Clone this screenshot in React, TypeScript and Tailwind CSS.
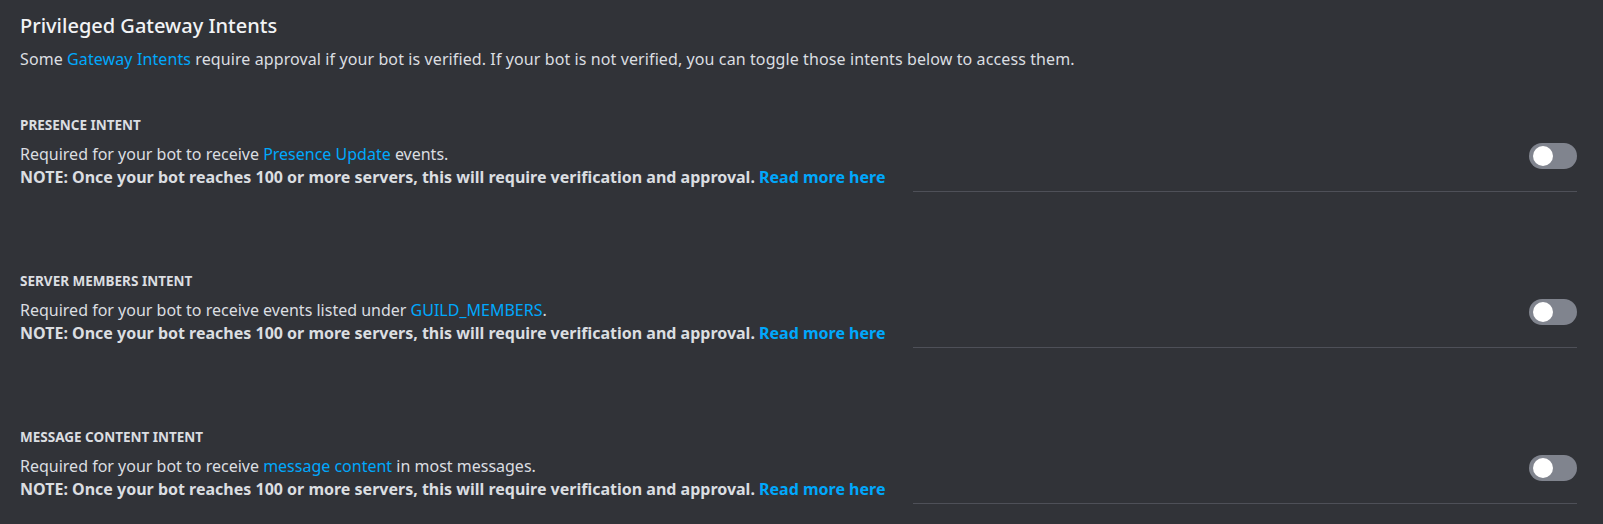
const intents = [
  {
    title: "PRESENCE INTENT",
    before: "Required for your bot to receive ",
    link: "Presence Update",
    after: " events.",
  },
  {
    title: "SERVER MEMBERS INTENT",
    before: "Required for your bot to receive events listed under ",
    link: "GUILD_MEMBERS",
    after: ".",
  },
  {
    title: "MESSAGE CONTENT INTENT",
    before: "Required for your bot to receive ",
    link: "message content",
    after: " in most messages.",
  },
];

function Toggle() {
  return (
    <button
      type="button"
      className="relative w-[48px] h-[26px] rounded-full bg-[#80848e] shrink-0"
    >
      <span className="absolute left-[4px] top-[3px] w-[20px] h-[20px] rounded-full bg-white" />
    </button>
  );
}

export default function App() {
  return (
    <div
      className="min-h-screen bg-[#313338] pl-5 pr-[26px] pt-[12px] text-[#dbdee1]"
      style={{ fontFamily: '"Noto Sans", sans-serif' }}
    >
      <h2 className="text-[20px] leading-[28px] font-medium text-[#f2f3f5]">
        Privileged Gateway Intents
      </h2>
      <p className="mt-[9px] text-[16px] leading-[20px] tracking-[0.1px]">
        Some <span className="text-[#00a8fc]">Gateway Intents</span> require
        approval if your bot is verified. If your bot is not verified, you can
        toggle those intents below to access them.
      </p>

      <div className="mt-[48px]">
        {intents.map((it) => (
          <div key={it.title} className="mb-[81px]">
            <div className="text-[13.5px] leading-[16px] font-bold uppercase">
              {it.title}
            </div>
            <div className="mt-[10px] flex items-start justify-between">
              <div className="text-[16px] leading-[22.5px]">
                <div>
                  {it.before}
                  <span className="text-[#00a8fc]">{it.link}</span>
                  {it.after}
                </div>
                <div className="font-bold">
                  NOTE: Once your bot reaches 100 or more servers, this will
                  require verification and approval.{" "}
                  <span className="text-[#00a8fc]">Read more here</span>
                </div>
              </div>
              <Toggle />
            </div>
            <div className="mt-[3px] ml-auto w-[664px] h-px bg-[#4e5058]" />
          </div>
        ))}
      </div>
    </div>
  );
}
